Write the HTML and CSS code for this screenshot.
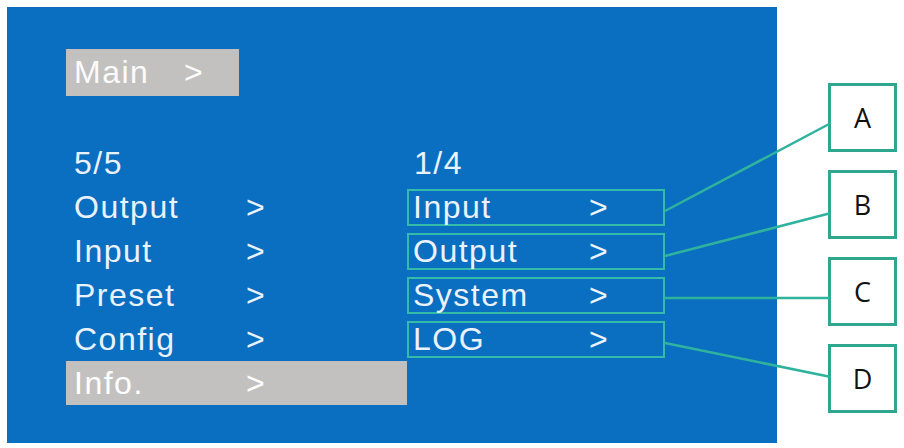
FILE: index.html
```html
<!DOCTYPE html>
<html lang="en">
<head>
<meta charset="utf-8">
<title>Menu – Info</title>
<link rel="stylesheet" href="styles.css">
</head>
<body>
<div class="page">
  <section class="screen">
    <div class="crumb"><span class="crumb-label">Main</span><span class="chev">&gt;</span></div>
    <div class="columns">
      <ul class="menu menu-main">
        <li class="row head">5/5</li>
        <li class="row"><span class="label">Output</span><span class="chev">&gt;</span></li>
        <li class="row"><span class="label">Input</span><span class="chev">&gt;</span></li>
        <li class="row"><span class="label">Preset</span><span class="chev">&gt;</span></li>
        <li class="row"><span class="label">Config</span><span class="chev">&gt;</span></li>
        <li class="row selected"><span class="label">Info.</span><span class="chev">&gt;</span></li>
      </ul>
      <ul class="menu menu-sub">
        <li class="row head">1/4</li>
        <li class="row"><div class="item"><span class="label">Input</span><span class="chev">&gt;</span></div></li>
        <li class="row"><div class="item"><span class="label">Output</span><span class="chev">&gt;</span></div></li>
        <li class="row"><div class="item"><span class="label">System</span><span class="chev">&gt;</span></div></li>
        <li class="row"><div class="item"><span class="label">LOG</span><span class="chev">&gt;</span></div></li>
      </ul>
    </div>
  </section>
  <aside class="callouts">
    <div class="tag">A</div>
    <div class="tag">B</div>
    <div class="tag">C</div>
    <div class="tag">D</div>
  </aside>
  <svg class="leaders" width="904" height="448" viewBox="0 0 904 448" aria-hidden="true">
    <line x1="665" y1="211" x2="831" y2="123"/>
    <line x1="665" y1="256" x2="831" y2="213"/>
    <line x1="665" y1="298" x2="831" y2="298"/>
    <line x1="665" y1="343" x2="831" y2="377"/>
  </svg>
</div>
</body>
</html>
```

FILE: styles.css
```css
html, body {
  margin: 0;
  padding: 0;
  background: #ffffff;
}

.page {
  position: relative;
  width: 904px;
  height: 448px;
  box-sizing: border-box;
  padding: 7px;
  display: flex;
  align-items: flex-start;
}

/* device screen */
.screen {
  width: 772px;
  height: 436px;
  box-sizing: border-box;
  background: #0a6ec1;
  padding: 42px 0 0 59px;
  font-family: "Liberation Sans", Arial, sans-serif;
  font-size: 32px;
  letter-spacing: 1.5px;
  color: #eaf2fb;
}

.crumb {
  width: 173px;
  height: 47px;
  line-height: 47px;
  box-sizing: border-box;
  padding-left: 8px;
  background: #c3c1bf;
  color: #fbfbfb;
  display: flex;
  white-space: nowrap;
}

.crumb-label {
  width: 110px;
}

.chev {
  white-space: nowrap;
}

.columns {
  display: flex;
  margin-top: 45px;
}

.menu {
  list-style: none;
  margin: 0;
  padding: 0;
}

.row {
  height: 44px;
  line-height: 44px;
  display: flex;
  white-space: nowrap;
}

.menu-main {
  width: 341px;
}

.menu-main .row {
  padding-left: 8px;
}

.menu-main .label {
  width: 172px;
}

.menu-main .selected {
  background: #c3c1bf;
  color: #ffffff;
}

.menu-sub {
  width: 260px;
}

.menu-sub .head {
  padding-left: 7px;
}

.item {
  display: flex;
  width: 258px;
  height: 37px;
  line-height: 33px;
  margin-top: 4px;
  box-sizing: border-box;
  border: 2px solid #34bcab;
  padding-left: 4px;
}

.menu-sub .label {
  width: 176px;
}

/* lettered callouts */
.callouts {
  display: flex;
  flex-direction: column;
  gap: 18px;
  margin: 76px 0 0 51px;
}

.tag {
  width: 69px;
  height: 69px;
  box-sizing: border-box;
  border: 3px solid #2fa68f;
  background: #ffffff;
  display: flex;
  align-items: center;
  justify-content: center;
  font-family: "Open Sans", "Noto Sans", sans-serif;
  font-size: 27px;
  color: #111111;
}

/* leader lines from menu items to callouts */
.leaders {
  position: absolute;
  left: 0;
  top: 0;
  pointer-events: none;
}

.leaders line {
  stroke: #30b39d;
  stroke-width: 2.5;
}
```
